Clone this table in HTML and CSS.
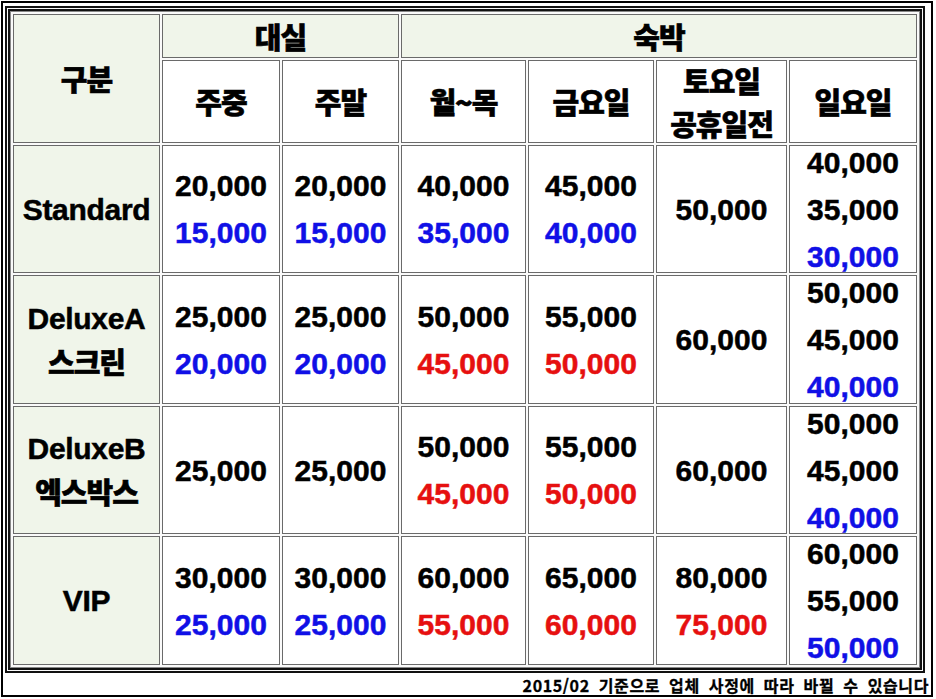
FILE: index.html
```html
<!DOCTYPE html>
<html lang="ko">
<head>
<meta charset="utf-8">
<title>요금표</title>
<link rel="stylesheet" href="styles.css">
</head>
<body>
<div class="frame">
  <div class="table">
    <div class="cell head ko span-r2">구분</div>
    <div class="cell head ko span-c2">대실</div>
    <div class="cell head ko span-c4">숙박</div>
    <div class="cell ko">주중</div>
    <div class="cell ko">주말</div>
    <div class="cell ko">월~목</div>
    <div class="cell ko">금요일</div>
    <div class="cell ko two"><span>토요일</span><span>공휴일전</span></div>
    <div class="cell ko">일요일</div>

    <div class="cell head label">Standard</div>
    <div class="cell num"><span>20,000</span><span class="b">15,000</span></div>
    <div class="cell num"><span>20,000</span><span class="b">15,000</span></div>
    <div class="cell num"><span>40,000</span><span class="b">35,000</span></div>
    <div class="cell num"><span>45,000</span><span class="b">40,000</span></div>
    <div class="cell num"><span>50,000</span></div>
    <div class="cell num"><span>40,000</span><span>35,000</span><span class="b">30,000</span></div>

    <div class="cell head label two"><span>DeluxeA</span><span class="ko">스크린</span></div>
    <div class="cell num"><span>25,000</span><span class="b">20,000</span></div>
    <div class="cell num"><span>25,000</span><span class="b">20,000</span></div>
    <div class="cell num"><span>50,000</span><span class="r">45,000</span></div>
    <div class="cell num"><span>55,000</span><span class="r">50,000</span></div>
    <div class="cell num"><span>60,000</span></div>
    <div class="cell num"><span>50,000</span><span>45,000</span><span class="b">40,000</span></div>

    <div class="cell head label two"><span>DeluxeB</span><span class="ko">엑스박스</span></div>
    <div class="cell num"><span>25,000</span></div>
    <div class="cell num"><span>25,000</span></div>
    <div class="cell num"><span>50,000</span><span class="r">45,000</span></div>
    <div class="cell num"><span>55,000</span><span class="r">50,000</span></div>
    <div class="cell num"><span>60,000</span></div>
    <div class="cell num"><span>50,000</span><span>45,000</span><span class="b">40,000</span></div>

    <div class="cell head label">VIP</div>
    <div class="cell num"><span>30,000</span><span class="b">25,000</span></div>
    <div class="cell num"><span>30,000</span><span class="b">25,000</span></div>
    <div class="cell num"><span>60,000</span><span class="r">55,000</span></div>
    <div class="cell num"><span>65,000</span><span class="r">60,000</span></div>
    <div class="cell num"><span>80,000</span><span class="r">75,000</span></div>
    <div class="cell num"><span>60,000</span><span>55,000</span><span class="b">50,000</span></div>
  </div>
  <div class="note">2015/02 기준으로 업체 사정에 따라 바뀔 수 있습니다</div>
</div>
</body>
</html>
```
FILE: styles.css
```css
html, body {
  margin: 0;
  padding: 0;
  background: #fff;
}
body {
  font-family: "Liberation Sans", "Noto Sans CJK KR", Arial, sans-serif;
  font-weight: 700;
  color: #000;
}
.frame {
  box-sizing: border-box;
  width: 932px;
  height: 696px;
  margin: 1px;
  border: 2px solid #000;
  padding: 3px 0 0 2px;
  display: flex;
  flex-direction: column;
}
.table {
  width: 920px;
  box-sizing: border-box;
  border: 5px double #111;
  padding: 3px;
  background: #fafafa;
  box-shadow: inset 0 0 0 1px #888;
  display: grid;
  grid-template-columns: 147px 118px 117px 125px 126px 131px 128px;
  grid-template-rows: 44px 83px 128px 129px 128px 129px;
  gap: 2px;
}
.cell {
  box-sizing: border-box;
  border: 1px solid #6a6a6a;
  background: #fff;
  display: flex;
  flex-direction: column;
  align-items: center;
  justify-content: center;
  text-align: center;
  font-size: 30px;
  line-height: 47px;
  white-space: nowrap;
  overflow: visible;
  -webkit-text-stroke: 0.5px currentColor;
}
.head {
  background: #f0f5ea;
}
.ko {
  font-family: "Noto Sans CJK KR", "Liberation Sans", sans-serif;
  font-size: 29px;
  font-weight: 900;
  letter-spacing: -1px;
  -webkit-text-stroke: 0.6px currentColor;
}
.two {
  line-height: 43px;
}
.span-r2 {
  grid-row: span 2;
}
.span-c2 {
  grid-column: span 2;
}
.span-c4 {
  grid-column: span 4;
}
.label {
  font-size: 30px;
  letter-spacing: -0.3px;
}
.b {
  color: #1010e6;
}
.r {
  color: #e61010;
}
.note {
  font-family: "Noto Sans CJK KR", "Liberation Sans", sans-serif;
  font-size: 16px;
  font-weight: 700;
  text-align: right;
  padding: 3px 2px 0 0;
  letter-spacing: 0.6px;
  word-spacing: 4px;
  line-height: 18px;
  -webkit-text-stroke: 0.3px currentColor;
}
```
